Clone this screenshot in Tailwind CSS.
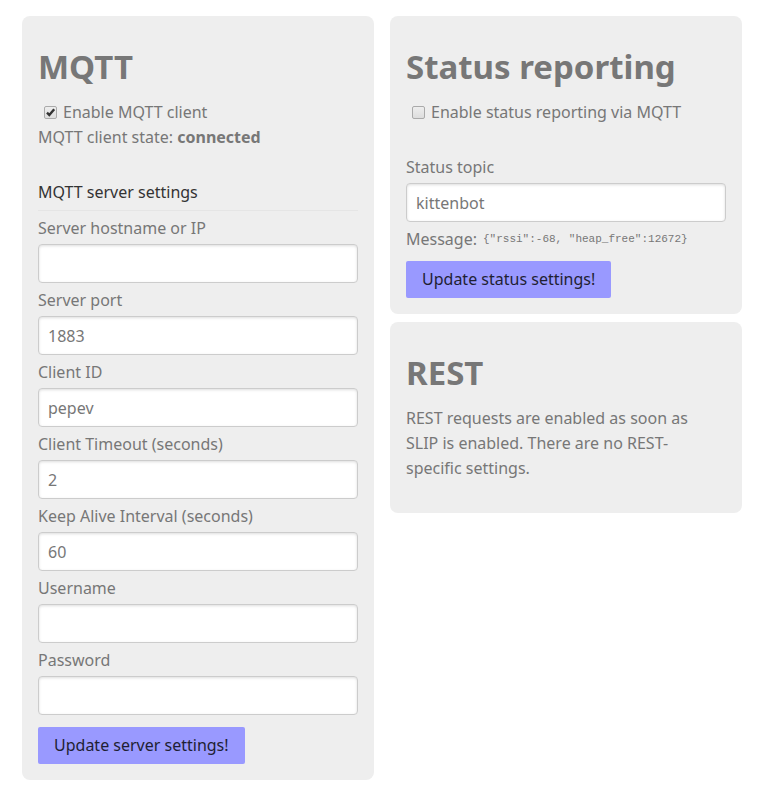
<!DOCTYPE html>
<html lang="en">
<head>
<meta charset="utf-8">
<meta name="viewport" content="width=device-width, initial-scale=1">
<title>MQTT settings</title>
<script src="https://cdn.jsdelivr.net/npm/@tailwindcss/browser@4"></script>
</head>
<body class="bg-white text-[#777] text-[16px] leading-[25px] font-['Noto_Sans','Open_Sans',sans-serif]">
<main class="grid grid-cols-2 items-start gap-4 pt-4 pb-4 pl-[22px] pr-7">
  <section class="rounded-lg bg-[#eee] p-4">
    <h1 class="mt-[10px] mb-2 text-[33px] leading-[50px] font-bold">MQTT</h1>
    <div class="flex items-center pl-[6px]">
      <span class="relative flex">
        <input id="mqtt-enable" type="checkbox" checked class="peer size-[13px] appearance-none rounded-xs border border-[#aaa] bg-linear-to-b from-[#eee] to-[#ddd]">
        <svg class="pointer-events-none absolute inset-0 size-[13px] opacity-0 peer-checked:opacity-100" viewBox="0 0 13 13" fill="none" stroke="#333" stroke-width="2.4" aria-hidden="true"><path d="M3 6.7 5.3 9 10.2 3.2"/></svg>
      </span>
      <label for="mqtt-enable" class="pl-[6px]">Enable MQTT client</label>
    </div>
    <div>MQTT client state: <b>connected</b></div>
    <form class="pt-[30px]">
      <fieldset>
        <legend class="mb-[5px] w-full border-b border-[#e5e5e5] pb-[5px] text-[#333]">MQTT server settings</legend>
        <div class="flex flex-col gap-[5px]">
          <div class="flex flex-col gap-[3px]"><label for="host">Server hostname or IP</label><input id="host" type="text" class="h-[39px] w-full rounded-sm border border-[#ccc] bg-white px-[9px] shadow-[inset_0_1px_3px_#ddd]"></div>
          <div class="flex flex-col gap-[3px]"><label for="port">Server port</label><input id="port" type="text" value="1883" class="h-[39px] w-full rounded-sm border border-[#ccc] bg-white px-[9px] shadow-[inset_0_1px_3px_#ddd]"></div>
          <div class="flex flex-col gap-[3px]"><label for="client">Client ID</label><input id="client" type="text" value="pepev" class="h-[39px] w-full rounded-sm border border-[#ccc] bg-white px-[9px] shadow-[inset_0_1px_3px_#ddd]"></div>
          <div class="flex flex-col gap-[3px]"><label for="timeout">Client Timeout (seconds)</label><input id="timeout" type="text" value="2" class="h-[39px] w-full rounded-sm border border-[#ccc] bg-white px-[9px] shadow-[inset_0_1px_3px_#ddd]"></div>
          <div class="flex flex-col gap-[3px]"><label for="keepalive">Keep Alive Interval (seconds)</label><input id="keepalive" type="text" value="60" class="h-[39px] w-full rounded-sm border border-[#ccc] bg-white px-[9px] shadow-[inset_0_1px_3px_#ddd]"></div>
          <div class="flex flex-col gap-[3px]"><label for="user">Username</label><input id="user" type="text" class="h-[39px] w-full rounded-sm border border-[#ccc] bg-white px-[9px] shadow-[inset_0_1px_3px_#ddd]"></div>
          <div class="flex flex-col gap-[3px]"><label for="pass">Password</label><input id="pass" type="password" class="h-[39px] w-full rounded-sm border border-[#ccc] bg-white px-[9px] shadow-[inset_0_1px_3px_#ddd]"></div>
        </div>
      </fieldset>
      <button type="button" class="mt-3 block rounded-xs bg-[#9999ff] px-4 py-[6px] text-[#1f1f33]">Update server settings!</button>
    </form>
  </section>
  <div class="flex flex-col gap-2">
    <section class="rounded-lg bg-[#eee] p-4">
      <h1 class="mt-[10px] mb-2 text-[33px] leading-[50px] font-bold">Status reporting</h1>
      <form>
        <div class="flex items-center pl-[6px]">
          <span class="relative flex">
            <input id="status-enable" type="checkbox" class="peer size-[13px] appearance-none rounded-xs border border-[#aaa] bg-linear-to-b from-[#eee] to-[#ddd]">
            <svg class="pointer-events-none absolute inset-0 size-[13px] opacity-0 peer-checked:opacity-100" viewBox="0 0 13 13" fill="none" stroke="#333" stroke-width="2.4" aria-hidden="true"><path d="M3 6.7 5.3 9 10.2 3.2"/></svg>
          </span>
          <label for="status-enable" class="pl-[6px]">Enable status reporting via MQTT</label>
        </div>
        <div class="mt-[30px] flex flex-col gap-[3px]"><label for="topic">Status topic</label><input id="topic" type="text" value="kittenbot" class="h-[39px] w-full rounded-sm border border-[#ccc] bg-white px-[9px] shadow-[inset_0_1px_3px_#ddd]"></div>
        <div class="mt-[5px] flex items-center gap-[6px]">Message: <code class="whitespace-nowrap text-[11px] font-['Liberation_Mono',monospace]">{"rssi":-68, "heap_free":12672}</code></div>
        <button type="button" class="mt-[9px] block rounded-xs bg-[#9999ff] px-4 py-[6px] text-[#1f1f33]">Update status settings!</button>
      </form>
    </section>
    <section class="rounded-lg bg-[#eee] p-4">
      <h1 class="mt-[10px] mb-2 text-[33px] leading-[50px] font-bold">REST</h1>
      <p class="mb-4 pr-4">REST requests are enabled as soon as SLIP is enabled. There are no REST-specific settings.</p>
    </section>
  </div>
</main>
</body>
</html>
